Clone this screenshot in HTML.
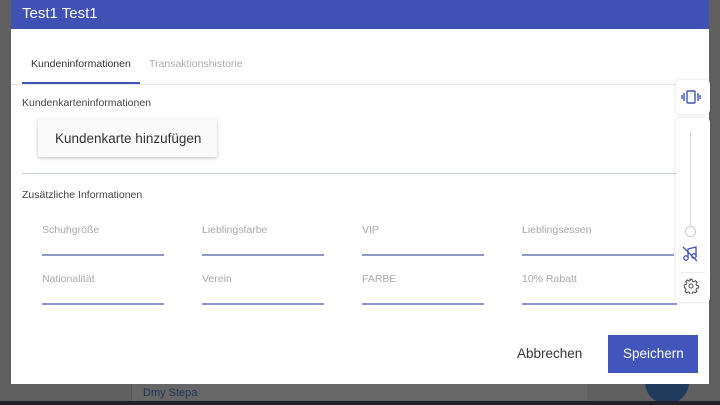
<!DOCTYPE html>
<html><head><meta charset="utf-8"><style>
*{margin:0;padding:0;box-sizing:border-box}
body{width:720px;height:405px;overflow:hidden;background:#5f5f5f;font-family:"Liberation Sans",sans-serif;position:relative}
.bgstrip{position:absolute;left:131px;top:384px;width:456px;height:18px;background:#666;border-left:1px solid #555}
.bgname{position:absolute;left:143px;top:387px;font-size:11px;color:#1c3458}
.bottom{position:absolute;left:0;top:401px;width:720px;height:4px;background:#1e2128}
.fab{position:absolute;left:645px;top:360px;width:44px;height:44px;border-radius:50%;background:#1f3a5a}
.dlg{position:absolute;left:11px;top:0;width:698px;height:384px;background:#fff}
.hdr{height:29px;background:#3f51b5;color:#fff;font-size:15px;padding:5px 0 0 11px}
.tab{position:absolute;top:58px;font-size:10.5px}
.abs{position:absolute}
.lbl{position:absolute;font-size:10.5px;color:#aaa}
.ln{position:absolute;height:2px;background:#8d98c9;width:122px}
</style></head><body>
<div class="bgstrip"></div><div class="bgname">Dmy Stepa</div><div class="fab"></div><div class="bottom"></div>
<div class="dlg">
<div class="hdr">Test1 Test1</div>
<div class="tab" style="left:20px;color:#333">Kundeninformationen</div>
<div class="tab" style="left:138px;color:#aab">Transaktionshistorie</div>
<div class="abs" style="left:11px;top:82px;width:118px;height:2px;background:#3f51b5"></div>
<div class="abs" style="left:0;top:84px;width:698px;height:1px;background:#e8ecef"></div>
<div class="abs" style="left:11px;top:97px;font-size:10.5px;color:#444">Kundenkarteninformationen</div>
<div class="abs" style="left:27px;top:119px;width:179px;height:38px;background:#fafafa;box-shadow:0 1px 3px rgba(0,0,0,.25);font-size:13.5px;color:#333;padding:12px 0 0 17px">Kundenkarte hinzufügen</div>
<div class="abs" style="left:11px;top:173px;width:654px;height:1px;background:#c9d0d4"></div>
<div class="abs" style="left:11px;top:189px;font-size:10.5px;color:#444">Zusätzliche Informationen</div>
<div class="lbl" style="left:31px;top:224px">Schuhgröße</div><div class="ln" style="left:31px;top:254px"></div>
<div class="lbl" style="left:191px;top:224px">Lieblingsfarbe</div><div class="ln" style="left:191px;top:254px"></div>
<div class="lbl" style="left:351px;top:224px">VIP</div><div class="ln" style="left:351px;top:254px"></div>
<div class="lbl" style="left:511px;top:224px">Lieblingsessen</div><div class="ln" style="left:511px;top:254px;width:152px"></div>
<div class="lbl" style="left:31px;top:273px">Nationalität</div><div class="ln" style="left:31px;top:303px"></div>
<div class="lbl" style="left:191px;top:273px">Verein</div><div class="ln" style="left:191px;top:303px"></div>
<div class="lbl" style="left:351px;top:273px">FARBE</div><div class="ln" style="left:351px;top:303px"></div>
<div class="lbl" style="left:511px;top:273px">10% Rabatt</div><div class="ln" style="left:511px;top:303px;width:155px"></div>
<div class="abs" style="left:506px;top:346px;font-size:13.5px;color:#333">Abbrechen</div>
<div class="abs" style="left:597px;top:335px;width:90px;height:38px;background:#4255bb;color:#fff;font-size:13.5px;padding:11px 0 0 15px">Speichern</div>
<!-- right toolbar -->
<div class="abs" style="left:665px;top:80px;width:34px;height:34px;background:#fff;border-radius:4px;box-shadow:0 0 3px rgba(0,0,0,.15)">
<svg width="34" height="34"><g fill="none" stroke="#4255bb" stroke-width="1.4"><rect x="11" y="11" width="8" height="12" rx="1"/><path d="M8 13v8M22 13v8M6 15v4M24 15v4"/></g></svg></div>
<div class="abs" style="left:665px;top:118px;width:34px;height:184px;background:#fff;border-radius:4px;box-shadow:0 0 3px rgba(0,0,0,.15)"></div>
<div class="abs" style="left:679px;top:130px;width:1px;height:96px;background:#ddd"></div>
<div class="abs" style="left:674px;top:226px;width:11px;height:11px;border-radius:50%;border:1px solid #ccc;background:#fff"></div>
<div class="abs" style="left:671px;top:245px"><svg width="16" height="17"><g fill="none" stroke="#4255bb" stroke-width="1.3"><circle cx="4" cy="13" r="2.2"/><circle cx="12" cy="11" r="2.2"/><path d="M6 13V4l8-2v9M1 2l14 14"/></g></svg></div>
<div class="abs" style="left:670px;top:272px;width:24px;height:1px;background:#eee"></div>
<div class="abs" style="left:672px;top:278px"><svg width="16" height="16" viewBox="0 0 24 24"><g fill="none" stroke="#555" stroke-width="1.6"><circle cx="12" cy="12" r="3"/><path d="M10.3 2h3.4l.6 2.8 2 .9 2.4-1.6 2.4 2.4-1.6 2.4.9 2 2.8.6v3.4l-2.8.6-.9 2 1.6 2.4-2.4 2.4-2.4-1.6-2 .9-.6 2.8h-3.4l-.6-2.8-2-.9-2.4 1.6-2.4-2.4 1.6-2.4-.9-2L2 13.7v-3.4l2.8-.6.9-2-1.6-2.4 2.4-2.4 2.4 1.6 2-.9z"/></g></svg></div>
</div>
</body></html>
